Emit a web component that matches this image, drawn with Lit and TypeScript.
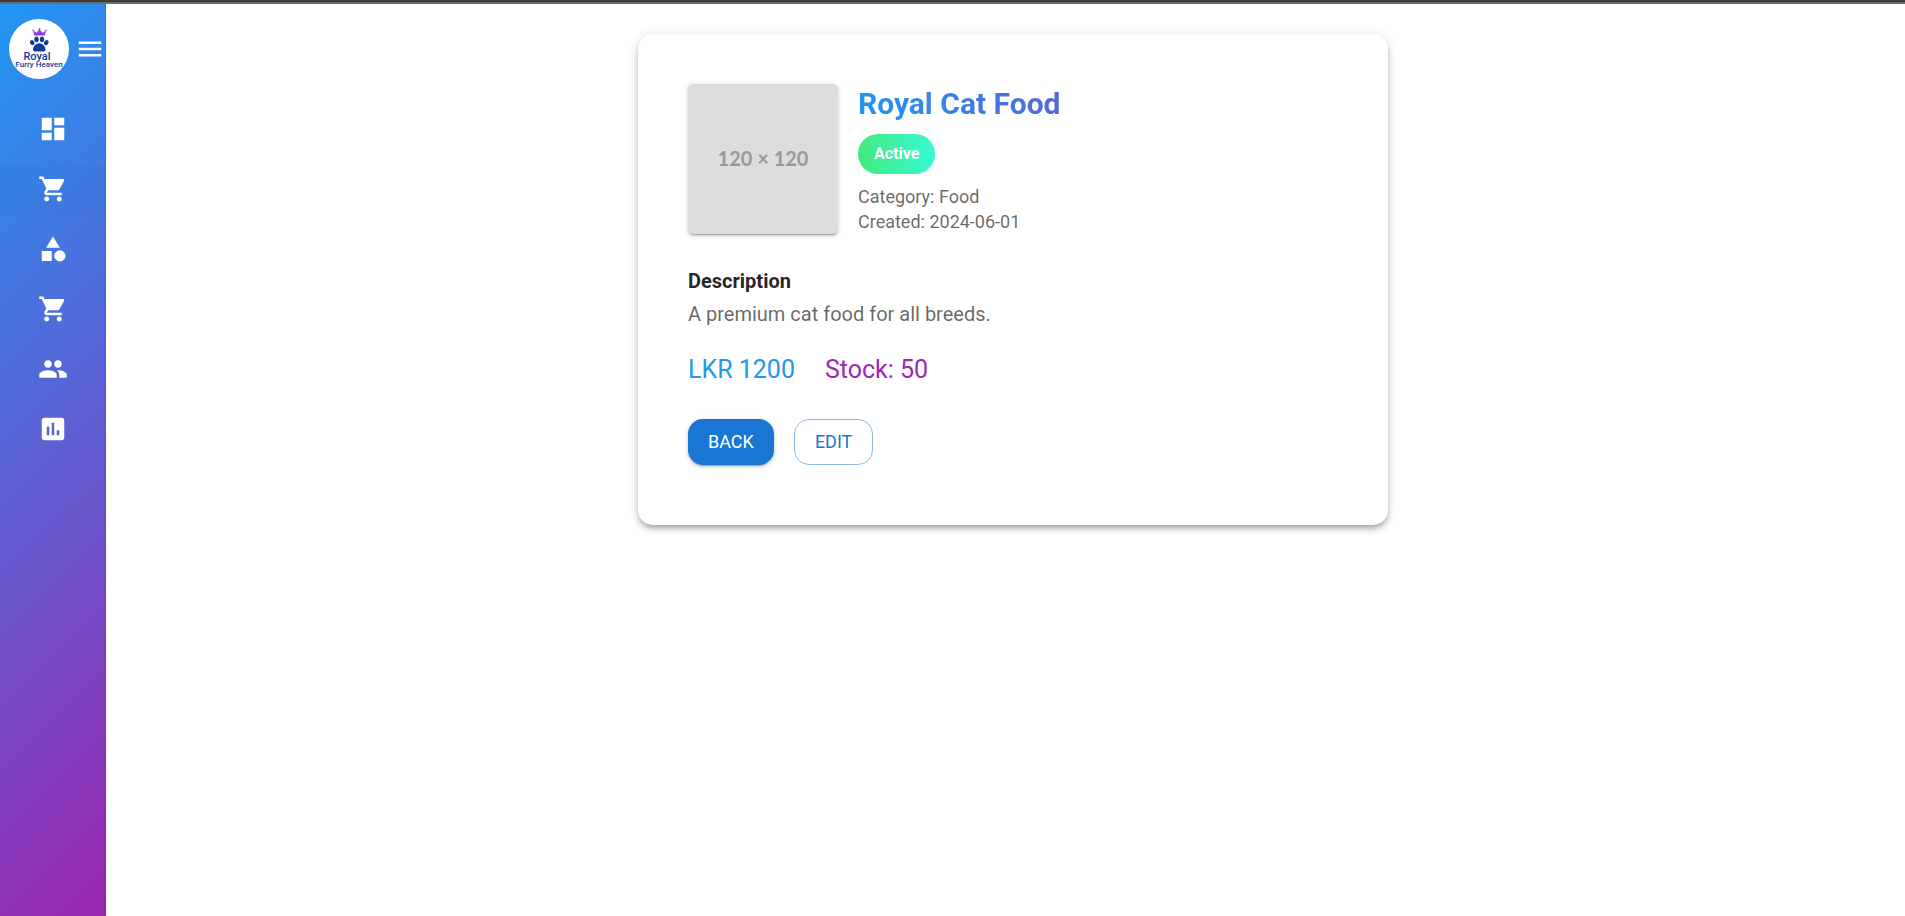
import { LitElement, html, css, svg } from "lit";
import { customElement, property } from "lit/decorators.js";

const CART = "M7 18c-1.1 0-1.99.9-1.99 2S5.9 22 7 22s2-.9 2-2-.9-2-2-2zM1 2v2h2l3.6 7.59-1.35 2.45c-.16.28-.25.61-.25.96 0 1.1.9 2 2 2h12v-2H7.42c-.14 0-.25-.11-.25-.25l.03-.12.9-1.63h7.45c.75 0 1.41-.41 1.75-1.03l3.58-6.49c.08-.14.12-.31.12-.48 0-.55-.45-1-1-1H5.21l-.94-2H1zm16 16c-1.1 0-1.99.9-1.99 2s.89 2 1.99 2 2-.9 2-2-.9-2-2-2z";

const NAV = [
  { label: "Dashboard", path: "M3 13h8V3H3v10zm0 8h8v-6H3v6zm10 0h8V11h-8v10zm0-18v6h8V3h-8z" },
  { label: "Products", path: CART, active: true },
  { label: "Categories", path: "M12 2l-5.5 9h11L12 2zm5.5 11a4.5 4.5 0 1 0 0 9 4.5 4.5 0 0 0 0-9zM3 13.5h8v8H3v-8z" },
  { label: "Orders", path: CART },
  { label: "Customers", path: "M16 11c1.66 0 2.99-1.34 2.99-3S17.66 5 16 5c-1.66 0-3 1.34-3 3s1.34 3 3 3zm-8 0c1.66 0 2.99-1.34 2.99-3S9.66 5 8 5C6.34 5 5 6.34 5 8s1.34 3 3 3zm0 2c-2.33 0-7 1.17-7 3.5V19h14v-2.5c0-2.33-4.67-3.5-7-3.5zm8 0c-.29 0-.62.02-.97.05 1.16.84 1.97 1.97 1.97 3.45V19h6v-2.5c0-2.33-4.67-3.5-7-3.5z" },
  { label: "Reports", path: "M19 3H5c-1.1 0-2 .9-2 2v14c0 1.1.9 2 2 2h14c1.1 0 2-.9 2-2V5c0-1.1-.9-2-2-2zM9 17H7v-7h2v7zm4 0h-2V7h2v10zm4 0h-2v-4h2v4z" },
];

@customElement("side-nav")
export class SideNav extends LitElement {
  static styles = css`
    :host {
      display: block;
      box-sizing: border-box;
      width: 106px;
      border-right: 1px solid rgba(0, 0, 0, 0.12);
      background: linear-gradient(135deg, #2196f3 0%, #9c27b0 100%) border-box;
    }
    .head {
      display: flex;
      align-items: center;
      justify-content: space-between;
      padding: 15px 0 15px 9px;
    }
    .logo { display: block; width: 60px; height: 60px; }
    .brand { font-family: Roboto, sans-serif; font-weight: 500; fill: #123a9c; }
    .menu {
      display: flex;
      padding: 0;
      border: 0;
      background: none;
      cursor: pointer;
    }
    .icon { display: block; width: 30px; height: 30px; fill: #fff; }
    .items {
      display: flex;
      flex-direction: column;
      gap: 10px;
      margin: 0;
      padding: 10px 0;
      list-style: none;
    }
    .item { display: flex; justify-content: center; padding: 10px 0; }
    .item.active { background: rgba(25, 118, 210, 0.08); }
  `;

  render() {
    return html`
      <div class="head">
        <svg class="logo" viewBox="0 0 60 60" role="img" aria-label="Royal Furry Heaven">
          <circle cx="30" cy="30" r="30" fill="#fff" />
          <g fill="#8a3fe0">
            <path d="M24 11.500l3.600 2.200 2.900-3.700 2.900 3.700 3.600-2.200-1.200 5H25.200z" />
            <circle cx="24" cy="11.300" r=".8" />
            <circle cx="30.500" cy="9.800" r=".9" />
            <circle cx="37" cy="11.300" r=".8" />
          </g>
          <g fill="#123a9c">
            <ellipse cx="23.200" cy="23.600" rx="2.100" ry="2.700" transform="rotate(-25 23.200 23.600)" />
            <ellipse cx="27.500" cy="20.300" rx="2.200" ry="2.900" />
            <ellipse cx="33" cy="20.300" rx="2.200" ry="2.900" />
            <ellipse cx="37.300" cy="23.600" rx="2.100" ry="2.700" transform="rotate(25 37.300 23.600)" />
            <path d="M30.300 24.200c-3.300 0-6.300 3.300-6.300 6 0 3.200 3.700 2.300 6.300 2.300s6.300.9 6.300-2.300c0-2.700-3-6-6.300-6z" />
          </g>
          <text class="brand" x="28" y="41" font-size="11" text-anchor="middle">Royal</text>
          <text class="brand" x="30" y="48" font-size="8" text-anchor="middle">Furry Heaven</text>
        </svg>
        <button class="menu" type="button" aria-label="Toggle menu">
          <svg class="icon" viewBox="0 0 24 24"><path d="M3 18h18v-2H3v2zm0-5h18v-2H3v2zm0-7v2h18V6H3z" /></svg>
        </button>
      </div>
      <nav>
        <ul class="items">
          ${NAV.map((n) => html`<li>
            <a class="item ${n.active ? "active" : ""}" href="#" aria-label=${n.label}>
              <svg class="icon" viewBox="0 0 24 24">${svg`<path d=${n.path} />`}</svg>
            </a>
          </li>`)}
        </ul>
      </nav>
    `;
  }
}

@customElement("product-card")
export class ProductCard extends LitElement {
  @property() name = "Royal Cat Food";
  @property() status = "Active";
  @property() category = "Food";
  @property() created = "2024-06-01";
  @property() description = "A premium cat food for all breeds.";
  @property({ type: Number }) price = 1200;
  @property({ type: Number }) stock = 50;

  static styles = css`
    :host {
      display: block;
      box-sizing: border-box;
      width: 100%;
      max-width: 750px;
      padding: 50px 50px 60px;
      border-radius: 15px;
      background: #fff;
      color: rgba(0, 0, 0, 0.87);
      box-shadow: 0 4px 5px -2px rgba(0, 0, 0, 0.2), 0 5px 6px rgba(0, 0, 0, 0.14), 0 1px 12px rgba(0, 0, 0, 0.12);
    }
    h1, h2, p { margin: 0; }
    .summary { display: flex; gap: 20px; margin-bottom: 30px; }
    .photo {
      display: grid;
      place-items: center;
      box-sizing: border-box;
      width: 150px;
      height: 150px;
      padding-bottom: 2px;
      border-radius: 5px;
      background: #ddd;
      color: #999;
      font: 700 20px/24px Lato, sans-serif;
      box-shadow: 0 3px 1px -2px rgba(0, 0, 0, 0.2), 0 2px 3px rgba(0, 0, 0, 0.14), 0 1px 6px rgba(0, 0, 0, 0.12);
    }
    .facts { flex: 1; }
    .title {
      font-size: 30px;
      line-height: 40px;
      font-weight: 700;
      background: linear-gradient(90deg, #2196f3, #9c27b0);
      -webkit-background-clip: text;
      background-clip: text;
      color: transparent;
    }
    .chip {
      display: block;
      width: fit-content;
      margin: 10px 0;
      padding: 0 16px;
      border-radius: 20px;
      background: linear-gradient(90deg, #43e97b, #38f9d7);
      color: #fff;
      font-size: 16px;
      line-height: 40px;
      font-weight: 700;
    }
    .meta { font-size: 18px; line-height: 25px; color: rgba(0, 0, 0, 0.6); }
    .heading { font-size: 20px; line-height: 35px; font-weight: 700; }
    .text { font-size: 20px; line-height: 30px; color: rgba(0, 0, 0, 0.6); }
    .figures { display: flex; gap: 30px; margin: 20px 0 28px; font-size: 25px; line-height: 42px; }
    .price { color: #2196f3; }
    .stock { color: #9c27b0; }
    .actions { display: flex; gap: 20px; }
    .btn {
      padding: 0 20px;
      border: 0;
      border-radius: 15px;
      background: #1976d2;
      color: #fff;
      font: 400 18px/46px Roboto, sans-serif;
      text-transform: uppercase;
      cursor: pointer;
      box-shadow: 0 4px 1px -3px rgba(0, 0, 0, 0.2), 0 2px 3px rgba(0, 0, 0, 0.14), 0 1px 6px rgba(0, 0, 0, 0.12);
    }
    .btn.outlined {
      border: 1px solid rgba(25, 118, 210, 0.5);
      background: none;
      color: #1976d2;
      line-height: 44px;
      box-shadow: none;
    }
  `;

  render() {
    return html`
      <div class="summary">
        <div class="photo" role="img" aria-label=${this.name}>120 × 120</div>
        <div class="facts">
          <h1 class="title">${this.name}</h1>
          <span class="chip">${this.status}</span>
          <p class="meta">Category: ${this.category}</p>
          <p class="meta">Created: ${this.created}</p>
        </div>
      </div>
      <h2 class="heading">Description</h2>
      <p class="text">${this.description}</p>
      <div class="figures">
        <span class="price">LKR ${this.price}</span>
        <span class="stock">Stock: ${this.stock}</span>
      </div>
      <div class="actions">
        <button class="btn" type="button">Back</button>
        <button class="btn outlined" type="button">Edit</button>
      </div>
    `;
  }
}

@customElement("app-root")
export class AppRoot extends LitElement {
  static styles = css`
    :host {
      display: flex;
      box-sizing: border-box;
      min-height: 100vh;
      border-top: 2px solid #3b3b3b;
      background: #fff;
      font-family: Roboto, sans-serif;
    }
    .shell { display: flex; flex: 1; border-top: 2px solid #6b6b6b; }
    .main {
      display: flex;
      flex: 1;
      align-items: flex-start;
      justify-content: center;
      padding: 30px 0 30px 15px;
    }
  `;

  render() {
    return html`
      <div class="shell">
        <side-nav></side-nav>
        <main class="main"><product-card></product-card></main>
      </div>
    `;
  }
}
